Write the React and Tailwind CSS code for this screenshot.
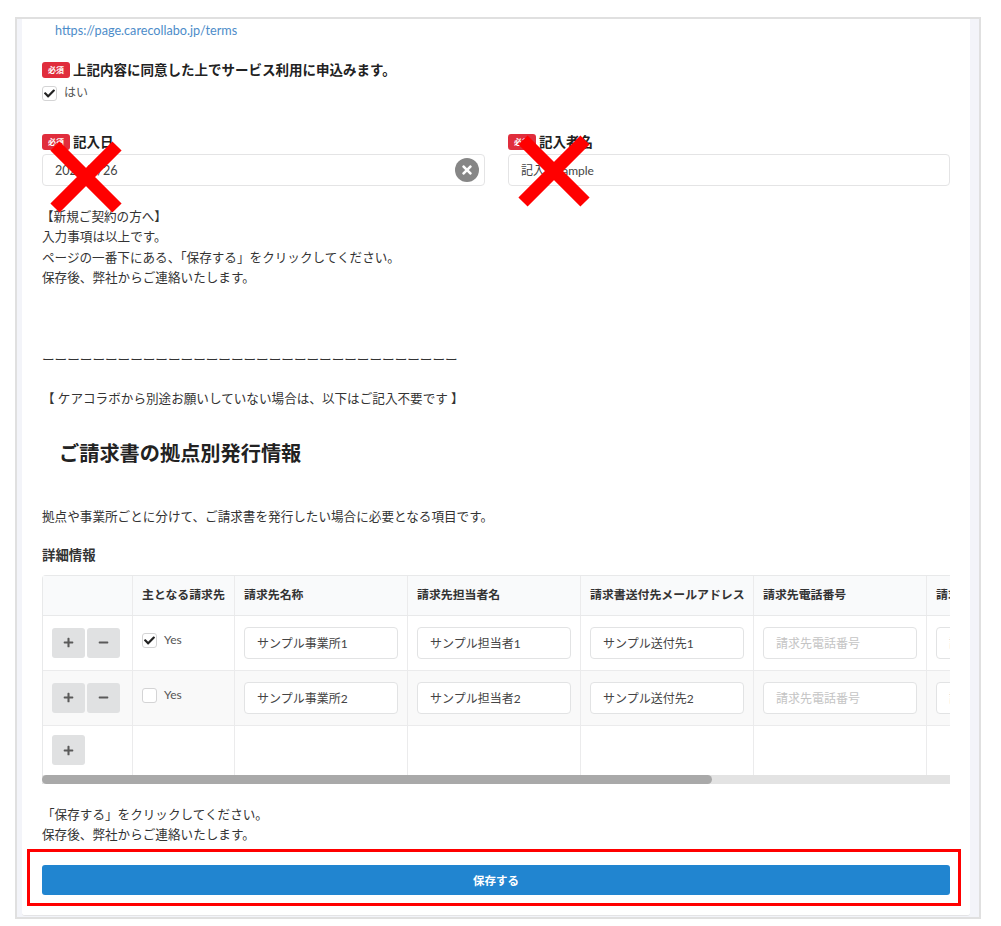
import React from 'react';
import { FaCheck, FaPlus, FaMinus, FaTimes } from 'react-icons/fa';

const COLUMNS = [
  { label: '', w: 'w-[90px]' },
  { label: '主となる請求先', w: 'w-[102px]' },
  { label: '請求先名称', w: 'w-[173px]' },
  { label: '請求先担当者名', w: 'w-[173px]' },
  { label: '請求書送付先メールアドレス', w: 'w-[173px]' },
  { label: '請求先電話番号', w: 'w-[173px]' },
  { label: '請求先FAX番号', w: 'w-[173px]' },
];

const ROWS = [
  { checked: true, name: 'サンプル事業所1', person: 'サンプル担当者1', mail: 'サンプル送付先1', bg: 'bg-white' },
  { checked: false, name: 'サンプル事業所2', person: 'サンプル担当者2', mail: 'サンプル送付先2', bg: 'bg-[#f9f9f9]' },
];

function Required() {
  return (
    <span className="mr-[3px] inline-flex h-[16px] w-[28px] shrink-0 items-center justify-center rounded-[3px] bg-[#e02d3c] text-[8px] font-bold leading-none text-white">
      必須
    </span>
  );
}

function Box({ checked }) {
  return (
    <span className="flex h-[15px] w-[15px] shrink-0 items-center justify-center rounded-[3px] border border-[#d4d4d5] bg-white">
      {checked && <FaCheck size={11} className="text-[#222]" />}
    </span>
  );
}

function SquareButton({ children }) {
  return (
    <span className="flex h-[30px] w-[33px] items-center justify-center rounded-[3px] bg-[#e0e1e2] text-[#5a5a5a]">
      {children}
    </span>
  );
}

function Cell({ value, placeholder }) {
  return (
    <div className="flex h-[32px] w-[154px] items-center rounded-[4px] border border-[#e2e3e4] bg-white px-[12px] pt-[2px] text-[12px]">
      {value ? <span className="text-[#444]">{value}</span> : <span className="text-[#c4c4c4]">{placeholder}</span>}
    </div>
  );
}

function Td({ children, w, className = '' }) {
  return <div className={`shrink-0 border-r border-[#ebebec] px-[9px] ${w} ${className}`}>{children}</div>;
}

function BillingTable() {
  return (
    <div className="mt-[10px] w-[908px] overflow-hidden">
      <div className="w-[1100px] rounded-t-[4px] border-l border-t border-[#e8e9ea] text-[12px]">
        <div className="flex h-[40px] border-b border-[#e8e9ea] bg-[#f9fafb] text-[11.9px] font-bold text-[#333]">
          {COLUMNS.map((c, i) => (
            <Td key={i} w={c.w} className="flex items-center whitespace-nowrap">{c.label}</Td>
          ))}
        </div>
        {ROWS.map((r) => (
          <div key={r.name} className={`flex h-[55px] border-b border-[#ebebec] ${r.bg}`}>
            <Td w={COLUMNS[0].w} className="flex items-center gap-[2px]">
              <SquareButton><FaPlus size={11} /></SquareButton>
              <SquareButton><FaMinus size={11} /></SquareButton>
            </Td>
            <Td w={COLUMNS[1].w} className="flex items-start gap-[7px] pt-[17px]">
              <Box checked={r.checked} />
              <span className="-mt-px text-[12px] leading-[15px] text-[#555]">Yes</span>
            </Td>
            <Td w={COLUMNS[2].w} className="flex items-center"><Cell value={r.name} /></Td>
            <Td w={COLUMNS[3].w} className="flex items-center"><Cell value={r.person} /></Td>
            <Td w={COLUMNS[4].w} className="flex items-center"><Cell value={r.mail} /></Td>
            <Td w={COLUMNS[5].w} className="flex items-center"><Cell placeholder="請求先電話番号" /></Td>
            <Td w={COLUMNS[6].w} className="flex items-center"><Cell placeholder="請求先FAX番号" /></Td>
          </div>
        ))}
        <div className="flex h-[49px]">
          <Td w={COLUMNS[0].w} className="flex items-center">
            <SquareButton><FaPlus size={11} /></SquareButton>
          </Td>
          {COLUMNS.slice(1).map((c, i) => <Td key={i} w={c.w} />)}
        </div>
      </div>
      <div className="h-[9px] bg-[#e3e3e3]">
        <div className="h-full w-[670px] rounded-[5px] bg-[#a9a9a9]" />
      </div>
    </div>
  );
}

function RedCross({ className }) {
  return (
    <svg className={`absolute ${className}`} width="72" height="72" viewBox="0 0 72 72">
      <path d="M5 5 L67 67 M67 5 L5 67" stroke="#ff0000" strokeWidth="13" fill="none" />
    </svg>
  );
}

export default function App() {
  return (
    <div className="relative h-[926px] w-[1001px] overflow-hidden bg-white pt-[17px] pl-[15px] font-['Lato','Noto_Sans_CJK_JP',sans-serif] text-[12.6px] text-[#333]">
      <div className="h-[902px] w-[966px] border-2 border-[#e0e0e0] bg-[#f3f4f9] pl-[5px] pr-[9px]">
        <div className="h-[897px] rounded-b-[3px] border-b border-[#e4e4e6] bg-white pl-[20px] pr-[20px]">
          <div className="pl-[13px] pt-[4px] text-[12.65px] leading-[16px] text-[#4d8cc9]">https://page.carecollabo.jp/terms</div>

          <div className="mt-[22px] flex h-[18px] items-center text-[13.5px] font-bold text-[#222]">
            <Required />上記内容に同意した上でサービス利用に申込みます。
          </div>
          <div className="mt-[6px] flex h-[16px] items-center gap-[7px] text-[12px] text-[#555]">
            <Box checked />はい
          </div>

          <div className="mt-[32px] flex gap-[23px]">
            <div className="w-[443px]">
              <div className="flex h-[18px] items-center text-[13.5px] font-bold text-[#222]"><Required />記入日</div>
              <div className="mt-[3px] flex h-[32px] items-center justify-between rounded-[4px] border border-[#e4e4e5] pl-[12px] pr-[5px] text-[#444]">
                <span className="pt-[2px]">2022/1/26</span>
                <span className="flex h-[24px] w-[24px] items-center justify-center rounded-full bg-[#868686] text-white">
                  <FaTimes size={14} />
                </span>
              </div>
            </div>
            <div className="w-[442px]">
              <div className="flex h-[18px] items-center text-[13.5px] font-bold text-[#222]"><Required />記入者名</div>
              <div className="mt-[3px] flex h-[32px] items-center rounded-[4px] border border-[#e4e4e5] px-[12px] pt-[2px] text-[12px] text-[#444]">
                記入者sample
              </div>
            </div>
          </div>

          <div className="mt-[21px] leading-[20.4px] text-[#333]">
            <div className="-ml-px">【新規ご契約の方へ】</div>
            <div>入力事項は以上です。</div>
            <div>ページの一番下にある、「保存する」をクリックしてください。</div>
            <div>保存後、弊社からご連絡いたします。</div>
          </div>

          <div className="mt-[61px] leading-[20px] whitespace-nowrap text-[#333]">ーーーーーーーーーーーーーーーーーーーーーーーーーーーーーーーーー</div>
          <div className="mt-[19px] leading-[20px] text-[#333]">【 ケアコラボから別途お願いしていない場合は、以下はご記入不要です 】</div>

          <h2 className="mt-[30px] pl-[17px] text-[20.2px] font-bold leading-[28px] text-[#222]">ご請求書の拠点別発行情報</h2>

          <div className="mt-[40px] leading-[20px] text-[#333]">拠点や事業所ごとに分けて、ご請求書を発行したい場合に必要となる項目です。</div>
          <div className="mt-[18px] text-[13.4px] font-bold leading-[20px] text-[#333]">詳細情報</div>

          <BillingTable />

          <div className="mt-[21px] leading-[20.4px] text-[#333]">
            <div>「保存する」をクリックしてください。</div>
            <div>保存後、弊社からご連絡いたします。</div>
          </div>

          <div className="mt-[20px] flex h-[30px] w-[908px] items-center justify-center rounded-[3px] bg-[#2185d0] text-[11.5px] font-bold text-white">
            保存する
          </div>
        </div>
      </div>

      {/* annotations drawn over the screenshot */}
      <RedCross className="left-[50px] top-[141px]" />
      <RedCross className="left-[518px] top-[135px]" />
      <div className="absolute left-[27px] top-[849px] h-[57px] w-[934px] border-[3px] border-[#ff0000]" />
    </div>
  );
}
